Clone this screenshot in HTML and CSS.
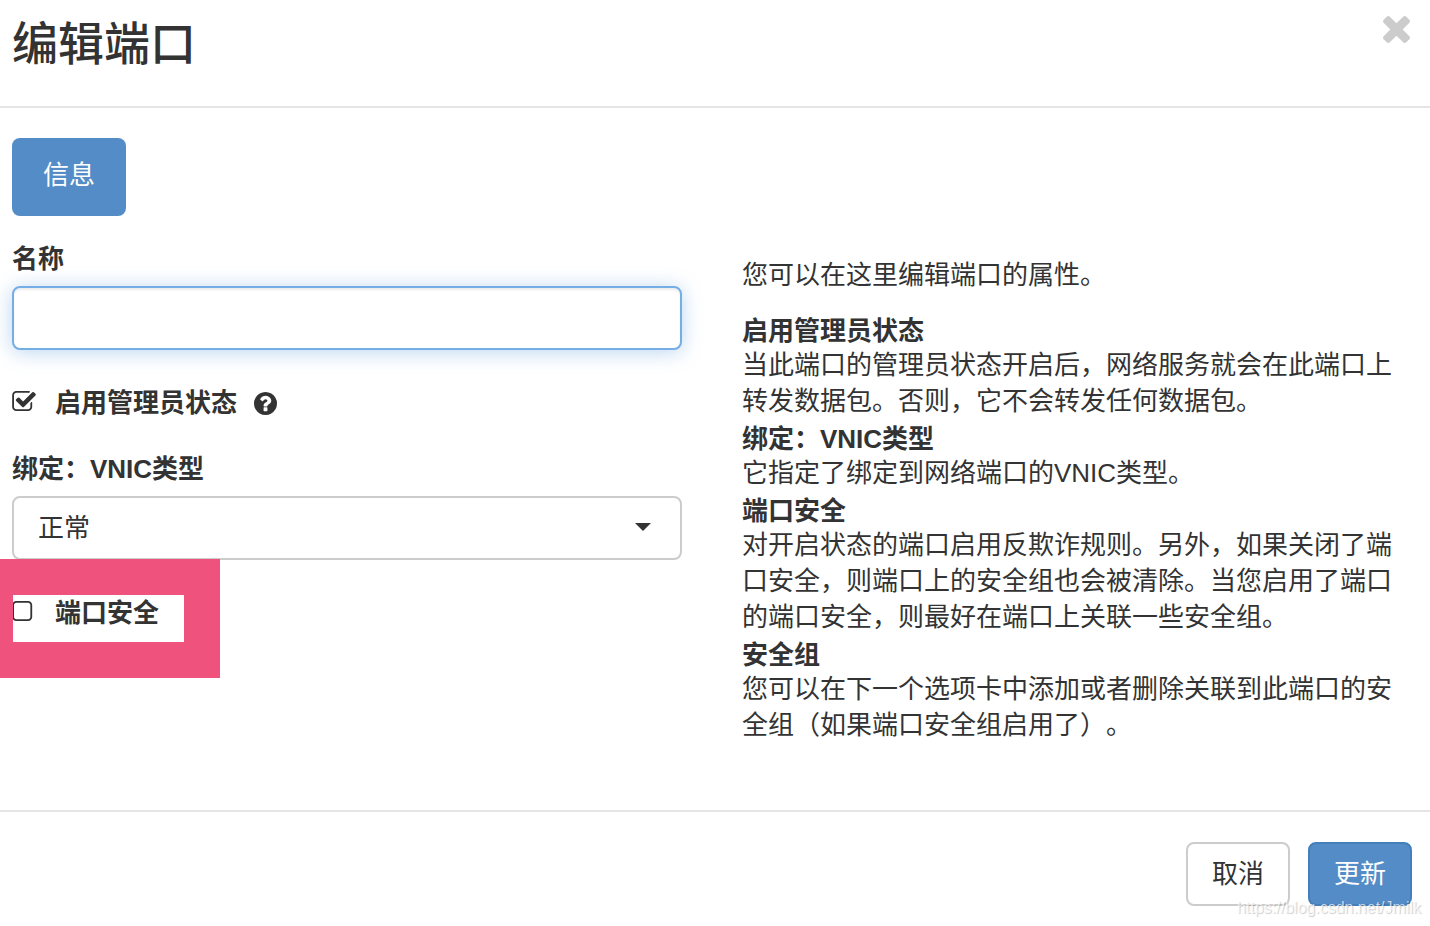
FILE: index.html
```html
<!DOCTYPE html>
<html lang="zh-CN">
<head>
    <meta charset="UTF-8">
    <meta name="viewport" content="width=device-width, initial-scale=1.0">
    <title>编辑端口</title>
    <link rel="stylesheet" href="styles.css">
</head>
<body>
    <form class="modal">
        <header class="modal-header">
            <h1>编辑端口</h1>
            <button type="button" class="close" aria-label="关闭">
                <svg viewBox="302 366 1188 1188"><path d="M1490 1322q0 40-28 68l-136 136q-28 28-68 28t-68-28l-294-294-294 294q-28 28-68 28t-68-28l-136-136q-28-28-28-68t28-68l294-294-294-294q-28-28-28-68t28-68l136-136q28-28 68-28t68 28l294 294 294-294q28-28 68-28t68 28l136 136q28 28 28 68t-28 68l-294 294 294 294q28 28 28 68z"/></svg>
            </button>
        </header>

        <div class="modal-body">
            <nav class="tabs">
                <a href="#info" class="tab">信息</a>
            </nav>
            <div class="columns" id="info">
                <div class="fields">
                    <div class="form-group">
                        <label for="name">名称</label>
                        <input type="text" id="name" class="form-control focused">
                    </div>
                    <div class="form-group checkbox">
                        <span class="check">
                            <input type="checkbox" id="adminState" checked>
                            <svg viewBox="64 128 1664 1408"><path d="M1472 930v318q0 119-84.5 203.5t-203.5 84.5h-832q-119 0-203.5-84.5t-84.5-203.5v-832q0-119 84.5-203.5t203.5-84.5h832q63 0 117 25 15 7 18 23 3 17-9 29l-49 49q-10 10-23 10-3 0-9-2-23-6-45-6h-832q-66 0-113 47t-47 113v832q0 66 47 113t113 47h832q66 0 113-47t47-113v-254q0-13 9-22l64-64q10-10 23-10 6 0 12 3 20 8 20 29zm231-489l-814 814q-24 24-57 24t-57-24l-430-430q-24-24-24-57t24-57l110-110q24-24 57-24t57 24l263 263 647-647q24-24 57-24t57 24l110 110q24 24 24 57t-24 57z"/></svg>
                        </span>
                        <label for="adminState">启用管理员状态</label>
                        <svg class="help" viewBox="128 128 1536 1536"><path d="M1024 1376v-192q0-14-9-23t-23-9h-192q-14 0-23 9t-9 23v192q0 14 9 23t23 9h192q14 0 23-9t9-23zm256-672q0-88-55.5-163t-138.5-116-170-41q-243 0-371 213-15 24 8 42l132 100q7 6 19 6 16 0 25-12 53-68 86-92 34-24 86-24 48 0 85.5 26t37.5 59q0 38-20 61t-68 45q-63 28-115.5 86.5t-52.5 125.5v36q0 14 9 23t23 9h192q14 0 23-9t9-23q0-19 21.5-49.5t54.5-49.5q32-18 49-28.5t46-35 44.5-48 28-60.5 12.5-81zm384 192q0 209-103 385.5t-279.5 279.5-385.5 103-385.5-103-279.5-279.5-103-385.5 103-385.5 279.5-279.5 385.5-103 385.5 103 279.5 279.5 103 385.5z"/></svg>
                    </div>
                    <div class="form-group">
                        <label for="vnic">绑定：VNIC类型</label>
                        <div class="select">
                            <select id="vnic" class="form-control">
                                <option>正常</option>
                            </select>
                            <span class="caret"></span>
                        </div>
                    </div>
                    <div class="form-group checkbox">
                        <span class="check">
                            <input type="checkbox" id="portSecurity">
                            <svg viewBox="192 128 1664 1408"><path d="M1312 256h-832q-66 0-113 47t-47 113v832q0 66 47 113t113 47h832q66 0 113-47t47-113v-832q0-66-47-113t-113-47zm288 160v832q0 119-84.5 203.5t-203.5 84.5h-832q-119 0-203.5-84.5t-84.5-203.5v-832q0-119 84.5-203.5t203.5-84.5h832q119 0 203.5 84.5t84.5 203.5z"/></svg>
                        </span>
                        <label for="portSecurity">端口安全</label>
                        <div class="marker"></div>
                    </div>
                </div>

                <div class="help-text">
                    <p>您可以在这里编辑端口的属性。</p>
                    <dl>
                        <dt>启用管理员状态</dt>
                        <dd>当此端口的管理员状态开启后，网络服务就会在此端口上转发数据包。否则，它不会转发任何数据包。</dd>
                        <dt>绑定：VNIC类型</dt>
                        <dd>它指定了绑定到网络端口的VNIC类型。</dd>
                        <dt>端口安全</dt>
                        <dd>对开启状态的端口启用反欺诈规则。另外，如果关闭了端口安全，则端口上的安全组也会被清除。当您启用了端口的端口安全，则最好在端口上关联一些安全组。</dd>
                        <dt>安全组</dt>
                        <dd>您可以在下一个选项卡中添加或者删除关联到此端口的安全组（如果端口安全组启用了）。</dd>
                    </dl>
                </div>
            </div>
        </div>

        <footer class="modal-footer">
            <button type="button" class="btn">取消</button>
            <button type="submit" class="btn btn-primary">更新</button>
            <span class="watermark">https://blog.csdn.net/Jmilk</span>
        </footer>
    </form>
</body>
</html>
```

FILE: styles.css
```css
* {
    box-sizing: border-box;
}
body {
    margin: 0;
    background: #fff;
    color: #333;
    font-family: "Liberation Sans", "Noto Sans CJK SC", sans-serif;
    font-size: 26px;
    line-height: 36px;
    text-spacing-trim: space-all;
}
button, input, select {
    font: inherit;
    color: inherit;
}
svg {
    display: block;
    fill: currentColor;
}

.modal-header {
    display: flex;
    justify-content: space-between;
    align-items: flex-start;
    padding: 16px 20px 34px 12px;
    border-bottom: 2px solid #e5e5e5;
}
h1 {
    margin: 0;
    font-size: 46px;
    font-weight: 500;
    line-height: 56px;
}
.close {
    padding: 0;
    border: none;
    background: none;
    color: #ccc;
    cursor: pointer;
}
.close svg {
    width: 27px;
    height: 27px;
}

.modal-body {
    padding: 30px 18px 67px 12px;
}
.tabs {
    display: flex;
}
.tab {
    padding: 19px 31px 23px;
    border-radius: 8px;
    background: #538cc6;
    color: #fff;
    text-decoration: none;
}
.columns {
    display: grid;
    grid-template-columns: 1fr 1fr;
    column-gap: 60px;
    padding-top: 25px;
}

.form-group {
    margin-bottom: 35px;
}
.form-group label {
    display: block;
    font-weight: bold;
}
.form-control {
    display: block;
    width: 100%;
    height: 64px;
    margin-top: 9px;
    padding: 0 24px;
    border: 2px solid #ccc;
    border-radius: 8px;
    background: #fff;
    outline: none;
}
.form-control.focused {
    border-color: #74aee4;
    box-shadow: inset 0 2px 2px rgba(0, 0, 0, 0.075), 0 2px 20px rgba(83, 150, 220, 0.4);
}
.select {
    position: relative;
}
select.form-control {
    appearance: none;
}
.caret {
    position: absolute;
    top: 27px;
    right: 31px;
    border-top: 8px solid #333;
    border-left: 8px solid transparent;
    border-right: 8px solid transparent;
    pointer-events: none;
}

.checkbox {
    display: flex;
    align-items: center;
    position: relative;
    margin-bottom: 30px;
}
.check {
    display: grid;
    margin-right: 19px;
    padding-bottom: 4px;
}
.check input, .check svg {
    grid-area: 1 / 1;
    width: 24px;
    height: 20px;
    margin: 0;
}
.check input {
    appearance: none;
}
.check svg {
    pointer-events: none;
}
.help {
    width: 23px;
    height: 23px;
    margin-left: 17px;
}
/* pink frame around the port security option */
.marker {
    position: absolute;
    top: -36px;
    left: -12px;
    width: 220px;
    height: 119px;
    border: 36px solid #f0527e;
    border-left-width: 13px;
    pointer-events: none;
}

.help-text {
    padding-top: 16px;
}
.help-text p {
    margin: 0 0 18px;
}
dl, dd {
    margin: 0;
}
dt {
    padding-top: 4px;
    font-weight: bold;
    line-height: 32px;
}

.modal-footer {
    display: flex;
    justify-content: flex-end;
    gap: 18px;
    position: relative;
    padding: 30px 18px 20px;
    border-top: 2px solid #e5e5e5;
}
.btn {
    padding: 12px 24px;
    border: 2px solid #ccc;
    border-radius: 8px;
    background: #fff;
    cursor: pointer;
}
.btn-primary {
    border-color: #447fb9;
    background: #538cc6;
    color: #fff;
}
.watermark {
    position: absolute;
    right: 9px;
    bottom: 8px;
    color: rgba(255, 255, 255, 0.7);
    font-size: 16px;
    line-height: 20px;
    text-shadow: 1px 1px 1px rgba(0, 0, 0, 0.2);
    pointer-events: none;
}
```
